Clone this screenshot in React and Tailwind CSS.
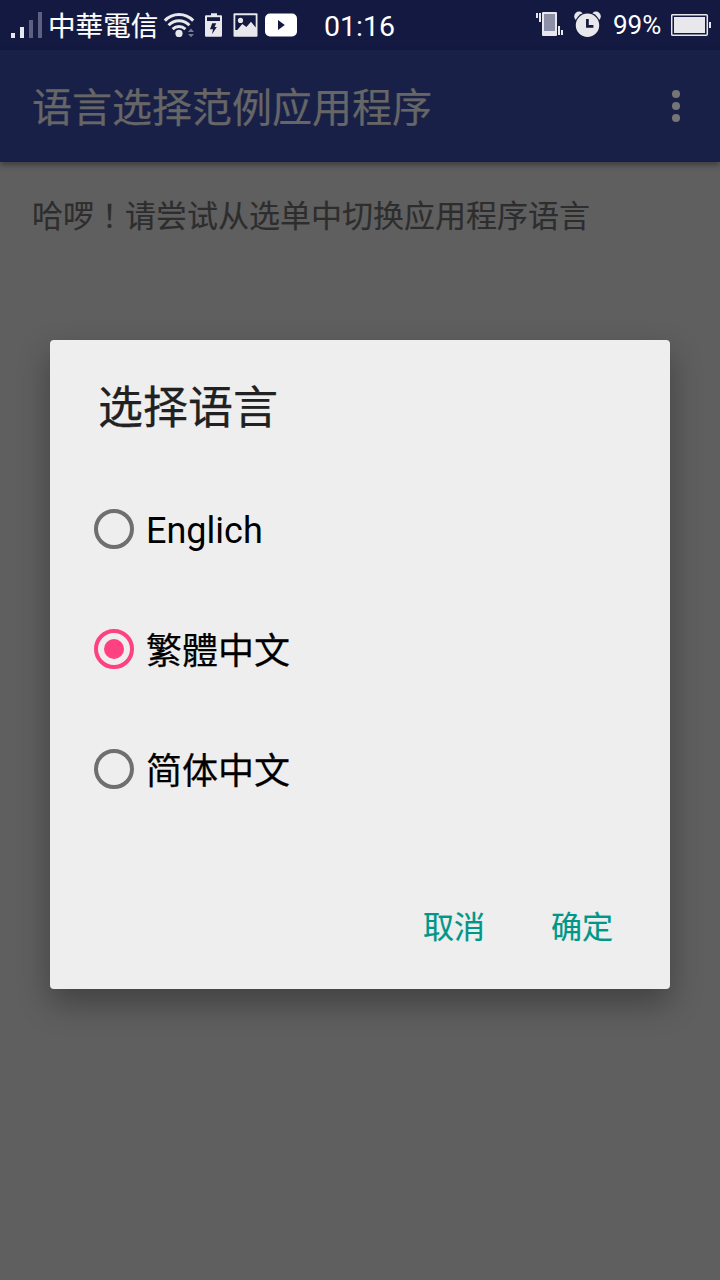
import { useState } from "react";

const SC = "font-['Roboto','Noto_Sans_CJK_SC',sans-serif]";
const TC = "font-['Roboto','Noto_Sans_CJK_TC',sans-serif]";

function SignalIcon() {
  return (
    <svg className="ml-[10px] h-[50px] w-[34px] shrink-0" viewBox="10 0 34 50" fill="#e8e8ec">
      <path d="M11 33h4v5h-4zM20 27h4v11h-4z" />
      <path d="M29 20h4v18h-4zM38 12h4v26h-4z" fill="#5d6080" />
    </svg>
  );
}

function NoticeIcons() {
  return (
    <svg className="h-[50px] w-[136px] shrink-0" viewBox="163 0 136 50">
      <g fill="none" stroke="#e8e8ec" strokeWidth="3">
        <path d="M164.8 20.6C172.6 12.4 185.4 12.4 193.2 20.6" />
        <path d="M168.6 25.2C174.6 19.2 183.4 19.2 189.4 25.2" />
        <path d="M172.6 29.2C176.4 25.7 181.6 25.7 185.4 29.2" />
      </g>
      <circle cx="179" cy="33.4" r="3.6" fill="#e8e8ec" />
      <path d="M188 32l3-3.4 3 3.4zM188 34l3 3.2 3-3.2z" fill="#777a96" />
      <path d="M211 13.3h6v2h4a1 1 0 0 1 1 1v19.5a1 1 0 0 1-1 1h-15a1 1 0 0 1-1-1V16.300a1 1 0 0 1 1-1h5z" fill="#e8e8ec" />
      <path d="M207 17.200h13v3.8h-13z" fill="#131940" />
      <path d="M212.200 23.200h4l-1.600 3.800h2.200l-4.800 7.200 1-5h-3z" fill="#131940" />
      <rect x="233.5" y="13.3" width="24" height="23.500" rx="1" fill="#e8e8ec" />
      <path d="M235.300 15.200h20.400v12.200l-4.700-5.600-4.600 5.200-4.100-3-5 6-2 0z" fill="#131940" />
      <circle cx="240.500" cy="20.400" r="2.600" fill="#e8e8ec" />
      <rect x="265" y="13.500" width="32" height="23" rx="5" fill="#fff" />
      <path d="M278 20l6.800 5-6.800 5z" fill="#131940" />
    </svg>
  );
}

function AlertIcons() {
  return (
    <svg className="h-[50px] w-[68px] shrink-0" viewBox="535 0 68 50" fill="#e8e8ec">
      <path d="M536 13h2v5h-2zM539 13h2v9h-2zM558 26h2v9h-2zM561 30h2v5h-2z" />
      <rect x="542" y="12" width="15" height="24" rx="1" />
      <path d="M544 14h11v17h-11z" fill="#8c8fa6" />
      <circle cx="579" cy="16.4" r="4.8" />
      <circle cx="596" cy="16.4" r="4.8" />
      <circle cx="587.5" cy="25" r="12.7" fill="#131940" />
      <circle cx="587.5" cy="25.3" r="11.7" />
      <path d="M587.4 19v7.4h6" fill="none" stroke="#131940" strokeWidth="2.7" />
    </svg>
  );
}

function BatteryIcon() {
  return (
    <svg className="mr-[8px] h-[50px] w-[41px] shrink-0" viewBox="671 0 41 50" fill="#e8e8ec">
      <rect x="671.7" y="14.7" width="35.6" height="20.6" rx="1" fill="none" stroke="#e8e8ec" strokeWidth="1.5" />
      <path d="M674 17h31v16h-31zM709 22h2v6h-2z" />
    </svg>
  );
}

function StatusBar() {
  return (
    <header className="flex h-[50px] items-center bg-[#131940] text-white">
      <SignalIcon />
      <span className={`ml-[4px] w-[115px] shrink-0 whitespace-nowrap pt-[3px] text-[27.6px] leading-[50px] [-webkit-text-stroke:0.15px] ${TC}`}>中華電信</span>
      <NoticeIcons />
      <span className="ml-[25px] pt-[3px] font-['Roboto',sans-serif] text-[28.5px] leading-[50px]">01:16</span>
      <span className="flex-1" />
      <AlertIcons />
      <span className="w-[68px] pl-[10px] font-['Roboto',sans-serif] text-[26px] leading-[48px]">99%</span>
      <BatteryIcon />
    </header>
  );
}

function Radio({ label, checked, onSelect, font }) {
  return (
    <button role="radio" aria-checked={checked} onClick={onSelect} className="flex h-[120px] items-center text-left">
      <svg className="h-10 w-10 shrink-0" viewBox="0 0 40 40">
        <circle cx="20" cy="20" r="18" fill="none" strokeWidth="4" stroke={checked ? "#ff4081" : "#6f6f6f"} />
        {checked && <circle cx="20" cy="20" r="10" fill="#ff4081" />}
      </svg>
      <span className={`ml-3 leading-[48px] text-black ${font}`}>{label}</span>
    </button>
  );
}

const languages = [
  { id: "en", label: "Englich", font: "pt-1 text-[36px] font-['Roboto',sans-serif]" },
  {
    id: "tw",
    label: "繁體中文",
    font: "pt-[6px] text-[36px] [-webkit-text-stroke:0.25px] font-['Roboto','Noto_Sans_CJK_TC',sans-serif]",
  },
  {
    id: "cn",
    label: "简体中文",
    font: "pt-[6px] text-[36px] [-webkit-text-stroke:0.25px] font-['Roboto','Noto_Sans_CJK_SC',sans-serif]",
  },
];

export default function App() {
  const [selected, setSelected] = useState("tw");
  return (
    <div className={`relative h-[1280px] w-[720px] overflow-hidden bg-[#5f5f5f] ${SC}`}>
      <StatusBar />
      <div className="flex h-[112px] items-center justify-between bg-[#192048] pl-8 pr-[40px] shadow-[0_3px_6px_rgba(0,0,0,0.35)]">
        <h1 className="pt-[5px] text-[40px] leading-[56px] text-[#666666] [-webkit-text-stroke:0.25px]">语言选择范例应用程序</h1>
        <div className="flex flex-col gap-1">
          <span className="h-2 w-2 rounded-full bg-[#757575]" />
          <span className="h-2 w-2 rounded-full bg-[#757575]" />
          <span className="h-2 w-2 rounded-full bg-[#757575]" />
        </div>
      </div>
      <p className="pl-8 pt-[33px] text-[31px] leading-[44px] text-[#2d2d2d] [-webkit-text-stroke:0.15px]">
        哈啰<span className={TC} lang="zh-TW">！</span>请尝试从选单中切换应用程序语言
      </p>

      <div
        role="dialog"
        className="absolute left-[50px] top-[340px] flex h-[649px] w-[620px] flex-col rounded bg-[#eeeeee] shadow-[0_14px_32px_rgba(0,0,0,0.32)]"
      >
        <h2 className="pl-12 pt-[39px] text-[45px] leading-[60px] text-[#212121] [-webkit-text-stroke:0.25px]">选择语言</h2>
        <div role="radiogroup" className="mt-[30px] flex flex-col pl-11">
          {languages.map((l) => (
            <Radio key={l.id} label={l.label} font={l.font} checked={selected === l.id} onSelect={() => setSelected(l.id)} />
          ))}
        </div>
        <div className="mt-auto flex justify-end gap-[66px] pb-[39px] pr-[57px] text-[31px] leading-[44px] text-[#009688] [-webkit-text-stroke:0.2px]">
          <button>取消</button>
          <button>确定</button>
        </div>
      </div>
    </div>
  );
}
